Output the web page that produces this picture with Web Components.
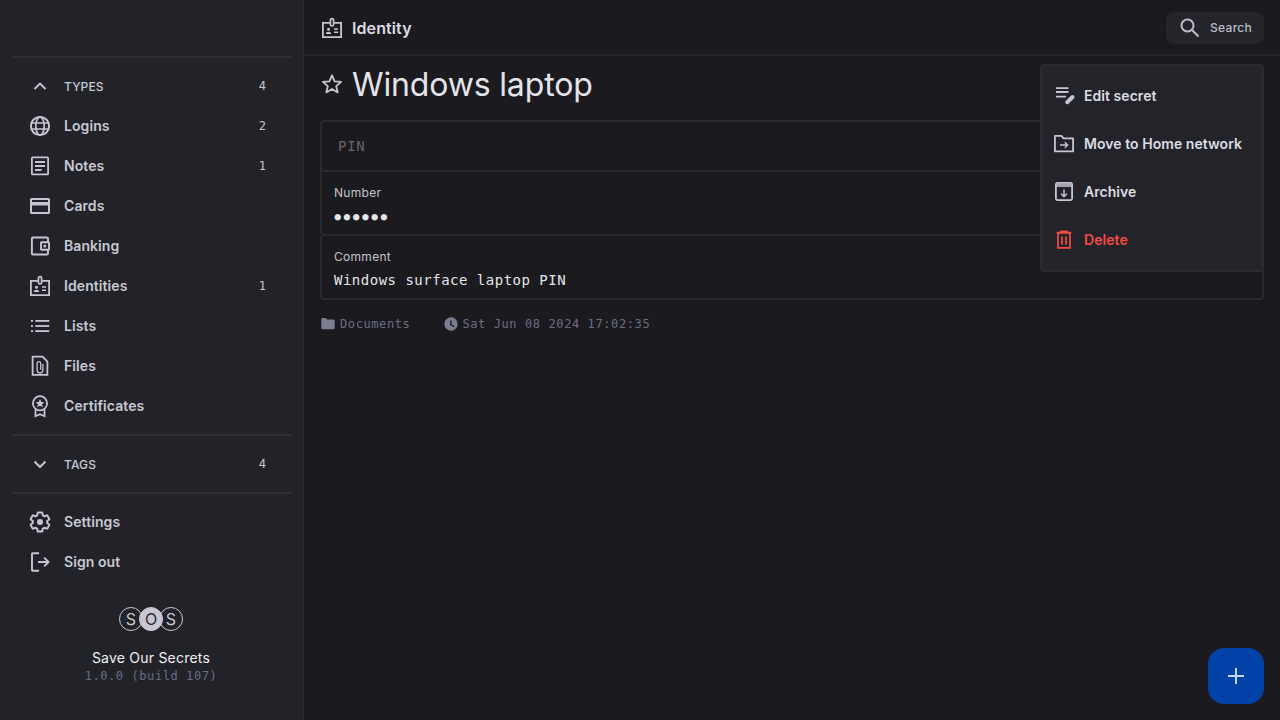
<!DOCTYPE html>
<html lang="en">
<head>
<meta charset="utf-8">
<title>Save Our Secrets</title>
<style>
html,body{margin:0;height:100%;background:#1a1a1f;}
body{font-family:Inter,"Liberation Sans",sans-serif;overflow:hidden;}
</style>
</head>
<body>
<sos-app>
  <sos-sidebar slot="sidebar">
    <nav-row slot="types" icon="chevup" label="TYPES" count="4" head></nav-row>
    <nav-row slot="types" icon="globe" label="Logins" count="2"></nav-row>
    <nav-row slot="types" icon="note" label="Notes" count="1"></nav-row>
    <nav-row slot="types" icon="card" label="Cards"></nav-row>
    <nav-row slot="types" icon="wallet" label="Banking"></nav-row>
    <nav-row slot="types" icon="badge" label="Identities" count="1"></nav-row>
    <nav-row slot="types" icon="list" label="Lists"></nav-row>
    <nav-row slot="types" icon="file" label="Files"></nav-row>
    <nav-row slot="types" icon="cert" label="Certificates"></nav-row>
    <nav-row slot="tags" icon="chevdown" label="TAGS" count="4" head></nav-row>
    <nav-row slot="account" icon="gear" label="Settings"></nav-row>
    <nav-row slot="account" icon="logout" label="Sign out"></nav-row>
    <sos-brand slot="brand"></sos-brand>
  </sos-sidebar>
  <sos-topbar slot="top"></sos-topbar>
  <secret-view slot="content">
    <secret-field slot="fields" label="Number" value="●●●●●●" dots></secret-field>
    <secret-field slot="fields" label="Comment" value="Windows surface laptop PIN"></secret-field>
  </secret-view>
  <action-menu slot="overlay">
    <menu-row icon="editnote" label="Edit secret"></menu-row>
    <menu-row icon="move" label="Move to Home network"></menu-row>
    <menu-row icon="archive" label="Archive"></menu-row>
    <menu-row icon="trash" label="Delete" danger></menu-row>
  </action-menu>
  <sos-fab slot="overlay"></sos-fab>
</sos-app>

<script>
const ICONS = {
  chevup:'<path d="M6.5 15 12 9.600 17.500 15" fill="none" stroke="currentColor" stroke-width="2"/>',
  chevdown:'<path d="M6.500 9.500 12 15 17.500 9.500" fill="none" stroke="currentColor" stroke-width="2"/>',
  globe:'<g fill="none" stroke="currentColor" stroke-width="1.700"><circle cx="12" cy="12" r="9.100" stroke-width="2"/><ellipse cx="12" cy="12" rx="4.200" ry="9.100"/><path d="M3.200 9h17.600M3.200 15h17.600"/></g>',
  note:'<g fill="none" stroke="currentColor" stroke-width="1.800"><rect x="3.900" y="3.400" width="16.200" height="17" rx=".6"/><path d="M7 8h10M7 12h10M7 16h6.500"/></g>',
  card:'<g fill="currentColor"><path fill-rule="evenodd" d="M3.500 4h17A1.500 1.500 0 0 1 22 5.500v13a1.500 1.500 0 0 1-1.500 1.500h-17A1.500 1.500 0 0 1 2 18.500v-13A1.500 1.500 0 0 1 3.500 4zM4 6v2h16V6zM4 11.500V18h16v-6.500z"/></g>',
  wallet:'<g fill="none" stroke="currentColor" stroke-width="1.900"><path d="M20 8V4.500a1 1 0 0 0-1-1H4.900a1 1 0 0 0-1 1v15a1 1 0 0 0 1 1H19a1 1 0 0 0 1-1V16"/><rect x="13" y="8.200" width="8" height="7.600" rx=".5"/></g><circle cx="16.800" cy="12" r="1.500" fill="currentColor"/>',
  badge:'<g fill="none" stroke="currentColor" stroke-width="1.800"><path d="M9.800 6.900H2.900v14.200h18.200V6.900h-6.900"/><rect x="10.400" y="2.600" width="3.200" height="7.400" rx="1.600" stroke-width="1.700"/><path d="M14 13h4M14 16.200h4" stroke-width="1.500"/></g><circle cx="8.500" cy="13.200" r="1.500" fill="currentColor"/><path d="M5.700 18c.2-1.600 1.400-2.300 2.800-2.300s2.600.7 2.800 2.300z" fill="currentColor"/>',
  list:'<g fill="currentColor"><rect x="3" y="6" width="2" height="1.800"/><rect x="3" y="11.100" width="2" height="1.800"/><rect x="3" y="16.200" width="2" height="1.800"/><rect x="7.300" y="6" width="14" height="1.800"/><rect x="7.300" y="11.100" width="14" height="1.800"/><rect x="7.300" y="16.200" width="14" height="1.800"/></g>',
  file:'<g fill="none" stroke="currentColor" stroke-width="1.800"><path d="M4.600 2.600h9.900l4.900 5v13.300H4.600z" stroke-linejoin="round"/></g><path d="M14.900 10v6.100a2.900 2.900 0 0 1-5.800 0V9.500a1.800 1.800 0 0 1 3.600 0v6.300" fill="none" stroke="currentColor" stroke-width="1.300"/>',
  cert:'<g fill="none" stroke="currentColor" stroke-width="1.800"><circle cx="12" cy="9.300" r="7.100"/><path d="M7.500 15.500v6.700l4.500-2 4.500 2v-6.700"/></g><path d="m12 5 1.300 2.900 3.100.3-2.350 2.050.7 3.050L12 11.700l-2.750 1.600.7-3.050L7.600 8.200l3.100-.3z" fill="currentColor"/>',
  gear:'<path d="M19.140 12.940c.04-.3.06-.61.06-.94 0-.32-.02-.64-.07-.94l2.030-1.580c.18-.14.23-.41.12-.61l-1.920-3.320c-.12-.22-.37-.29-.59-.22l-2.390.96c-.5-.38-1.030-.7-1.620-.94l-.36-2.540c-.04-.24-.24-.41-.48-.41h-3.840c-.24 0-.43.17-.47.41l-.36 2.540c-.59.24-1.130.57-1.620.94l-2.390-.96c-.22-.08-.47 0-.59.22L2.740 8.870c-.12.21-.08.47.12.61l2.030 1.580c-.05.3-.09.63-.09.94s.02.64.07.94l-2.030 1.580c-.18.14-.23.41-.12.61l1.920 3.320c.12.22.37.29.59.22l2.390-.96c.5.38 1.030.7 1.620.94l.36 2.540c.05.24.24.41.48.41h3.840c.24 0 .44-.17.47-.41l.36-2.540c.59-.24 1.130-.56 1.620-.94l2.390.96c.22.08.47 0 .59-.22l1.920-3.320c.12-.22.07-.47-.12-.61z" fill="none" stroke="currentColor" stroke-width="2"/><circle cx="12" cy="12" r="3" fill="currentColor"/>',
  logout:'<g fill="none" stroke="currentColor" stroke-width="1.900"><path d="M11 3.300H4.500a.5.5 0 0 0-.5.500v16.400a.5.5 0 0 0 .5.500H11"/><path d="M10 12h10.500M16.200 7.700 20.500 12l-4.300 4.300"/></g>',
  editnote:'<path d="M4 4.100h12.500M4 8h12.500M4 12.600h10" fill="none" stroke="currentColor" stroke-width="1.800"/><path d="M15.200 18.200 20.500 13" fill="none" stroke="currentColor" stroke-width="4" stroke-linecap="round"/>',
  move:'<g fill="none" stroke="currentColor" stroke-width="1.800"><path d="M2.900 3.900h6.600l2 2.400h9.600v13H2.900z" stroke-linejoin="round"/><path d="M8 13h7.500M12.800 10.200l2.800 2.800-2.800 2.800" stroke-width="1.500"/></g>',
  archive:'<g fill="none" stroke="currentColor" stroke-width="1.800"><rect x="3.900" y="2.900" width="16.200" height="17.200" rx="1.500"/></g><rect x="4.500" y="3.500" width="15" height="3.500" fill="currentColor" opacity=".8"/><path d="M12 9.500v7M9 13.700l3 3 3-3" fill="none" stroke="currentColor" stroke-width="1.500"/>',
  trash:'<g fill="none" stroke="currentColor" stroke-width="1.700"><path d="M6 5h12v14.800H6zM4.700 4.700h14.600M9 4.700V3.400h6v1.300"/><path d="M10 8.500v8M14 8.500v8"/></g>',
  search:'<g fill="none" stroke="currentColor" stroke-width="2"><circle cx="9.500" cy="9.500" r="6"/><path d="m14 14 6.500 6.500"/></g>',
  star:'<path d="m12 3.300 2.600 6 6.500.6-4.900 4.200 1.500 6.300L12 17l-5.700 3.400 1.500-6.300-4.900-4.200 6.500-.6z" fill="none" stroke="currentColor" stroke-width="1.800" stroke-linejoin="round"/>',
  folder:'<path d="M2 4.500A1.500 1.500 0 0 1 3.500 3h5l2 2.300h10A1.500 1.500 0 0 1 22 6.800v11.700a1.500 1.500 0 0 1-1.500 1.500h-17A1.500 1.500 0 0 1 2 18.500z" fill="currentColor"/>',
  clock:'<path fill-rule="evenodd" fill="currentColor" d="M12 2a10 10 0 1 1 0 20 10 10 0 0 1 0-20zm-1.300 4.500v7l5.800 3.500 1-1.700-4.700-2.800v-6z"/>',
  plus:'<path d="M12 4v16M4 12h16" fill="none" stroke="currentColor" stroke-width="2"/>'
};

function define(name, css, html){
  customElements.define(name, class extends HTMLElement{
    constructor(){super();this.attachShadow({mode:'open'});}
    connectedCallback(){
      const a = k => this.getAttribute(k);
      this.shadowRoot.innerHTML = '<style>'+css+'</style>'+(typeof html==='function'?html(a,this):html);
    }
  });
}

define('sos-icon',
  ':host{display:inline-flex;flex:none;width:var(--s,24px);height:var(--s,24px)}svg{width:100%;height:100%;display:block}',
  a=>'<svg viewBox="0 0 24 24" aria-hidden="true">'+(ICONS[a('name')]||'')+'</svg>');

define('sos-app',
  `:host{display:flex;width:1280px;height:720px;position:relative;overflow:hidden;background:#1a1a1f}
   .side{flex:none;width:304px}
   .main{flex:1;min-width:0;display:flex;flex-direction:column}`,
  `<div class="side"><slot name="sidebar"></slot></div>
   <div class="main"><slot name="top"></slot><slot name="content"></slot></div>
   <slot name="overlay"></slot>`);

define('sos-sidebar',
  `:host{display:flex;flex-direction:column;box-sizing:border-box;width:304px;height:720px;padding:56px 12px 0;background:#222329;border-right:1px solid #2b2c33}
   hr{border:0;height:2px;margin:0;background:#2c2d35;flex:none}
   .g{display:flex;flex-direction:column;padding:8px 0}
   .brand{margin-top:17px}`,
  `<hr><div class="g"><slot name="types"></slot></div>
   <hr><div class="g"><slot name="tags"></slot></div>
   <hr><div class="g"><slot name="account"></slot></div>
   <div class="brand"><slot name="brand"></slot></div>`);

define('nav-row',
  `:host{display:flex;align-items:center;height:40px;box-sizing:border-box;padding:0 25px 0 16px;color:#c6c6d0}
   sos-icon{margin-right:12px}
   .l{flex:1;font:600 14px/20px Inter,"Liberation Sans",sans-serif;letter-spacing:.08px;color:#c8c8d2}
   .head{font:500 12px/16px Inter,"Liberation Sans",sans-serif;letter-spacing:.1px;padding-top:1px}
   .c{font:12px/16px "DejaVu Sans Mono","Liberation Mono",monospace;color:#c4c4ce;margin-top:-1px}`,
  (a,el)=>`<sos-icon name="${a('icon')}"></sos-icon><span class="l ${el.hasAttribute('head')?'head':''}">${a('label')}</span>${a('count')?`<span class="c">${a('count')}</span>`:''}`);

define('sos-brand',
  `:host{display:flex;flex-direction:column;align-items:center;margin-left:-1px}
   .logo{display:flex}
   .o{box-sizing:border-box;width:24px;height:24px;border-radius:50%;border:1px solid #c6c6d0;color:#c6c6d0;display:flex;align-items:center;justify-content:center;font:400 16px/1 Inter,"Liberation Sans",sans-serif}
   .o+.o{margin-left:-4px}
   .m{background:#c8c8d4;color:#2a2b31;position:relative}
   .n{margin-top:17px;font:400 14px/20px Inter,"Liberation Sans",sans-serif;letter-spacing:.22px;color:#f0f0f3}
   .v{font:12px/16px "DejaVu Sans Mono","Liberation Mono",monospace;letter-spacing:.58px;color:#6a6c84}`,
  `<div class="logo"><span class="o">S</span><span class="o m">O</span><span class="o">S</span></div>
   <div class="n">Save Our Secrets</div><div class="v">1.0.0 (build 107)</div>`);

define('sos-topbar',
  `:host{display:flex;align-items:center;box-sizing:border-box;height:56px;padding:2px 16px 0;border-bottom:2px solid #25272d;color:#c6c6d0}
   .t{flex:1;margin-left:8px;font:600 16px/24px Inter,"Liberation Sans",sans-serif;letter-spacing:.1px;color:#dcdce2}
   .s{display:flex;align-items:center;box-sizing:border-box;width:98px;height:32px;padding:0 12px;border-radius:8px;background:#23252b;font:500 12px/16px Inter,"Liberation Sans",sans-serif;letter-spacing:.3px;color:#bdbdc8}
   .s span{margin-left:8px}`,
  `<sos-icon name="badge"></sos-icon><div class="t">Identity</div>
   <div class="s"><sos-icon name="search"></sos-icon><span>Search</span></div>`);

define('secret-view',
  `:host{display:block;flex:1;padding:8px 16px 0}
   .h{display:flex;align-items:center;height:40px;margin-bottom:16px;color:#c6c6d0}
   .h span{margin-left:8px;padding-top:2px;font:400 32px/38px Inter,"Liberation Sans",sans-serif;color:#e4e4ea;letter-spacing:-.15px}
   .pin{box-sizing:border-box;height:52px;padding:0 16px;display:flex;align-items:center;border:2px solid #282a30;border-radius:4px 4px 0 0;font:14px/20px "DejaVu Sans Mono","Liberation Mono",monospace;letter-spacing:.7px;color:#67676d}
   .m{display:flex;align-items:center;height:16px;margin-top:16px;font:12px/16px "DejaVu Sans Mono","Liberation Mono",monospace;letter-spacing:.6px;color:#6c6e80}
   .m sos-icon{--s:16px;color:#7c7e90;margin-right:3px}
   .m .f{margin-right:4px}
   .m .d{margin-left:33px}`,
  `<div class="h"><sos-icon name="star"></sos-icon><span>Windows laptop</span></div>
   <div class="pin">PIN</div>
   <slot name="fields"></slot>
   <div class="m"><sos-icon class="f" name="folder"></sos-icon>Documents<sos-icon class="d" name="clock"></sos-icon>Sat Jun 08 2024 17:02:35</div>`);

define('secret-field',
  `:host{display:block;box-sizing:border-box;height:64px;padding:13px 12px 0;border:2px solid #282a30;border-top:0;border-radius:0 0 4px 4px}
   .l{font:400 12px/16px Inter,"Liberation Sans",sans-serif;letter-spacing:.3px;color:#c4c4cc}
   .v{margin-top:7px;font:14px/16px "DejaVu Sans Mono","Liberation Mono",monospace;letter-spacing:.5px;color:#e6e6ea;white-space:pre}
   .dots{font-size:10.500px;letter-spacing:2.950px;margin-top:7px;padding-left:.5px}`,
  (a,el)=>`<div class="l">${a('label')}</div><div class="v ${el.hasAttribute('dots')?'dots':''}">${a('value')}</div>`);

define('action-menu',
  `:host{position:absolute;left:1040px;top:64px;width:224px;height:208px;box-sizing:border-box;padding:6px 0;background:#23242a;border:2px solid #2a2b32;border-radius:4px;display:flex;flex-direction:column}`,
  `<slot></slot>`);

define('menu-row',
  `:host{display:flex;align-items:center;height:48px;padding-left:10px;color:#c6c6d0}
   span{margin-left:8px;font:600 14px/20px Inter,"Liberation Sans",sans-serif;letter-spacing:.05px;color:#dcdce2}
   :host([danger]){color:#f44a42}
   :host([danger]) span{color:#f44a42}`,
  a=>`<sos-icon name="${a('icon')}"></sos-icon><span>${a('label')}</span>`);

define('sos-fab',
  `:host{position:absolute;left:1208px;top:648px;width:56px;height:56px;border-radius:16px;background:#0042a8;color:#c4d6f5;display:flex;align-items:center;justify-content:center}
   sos-icon{--s:24px}`,
  `<sos-icon name="plus"></sos-icon>`);
</script>
</body>
</html>
